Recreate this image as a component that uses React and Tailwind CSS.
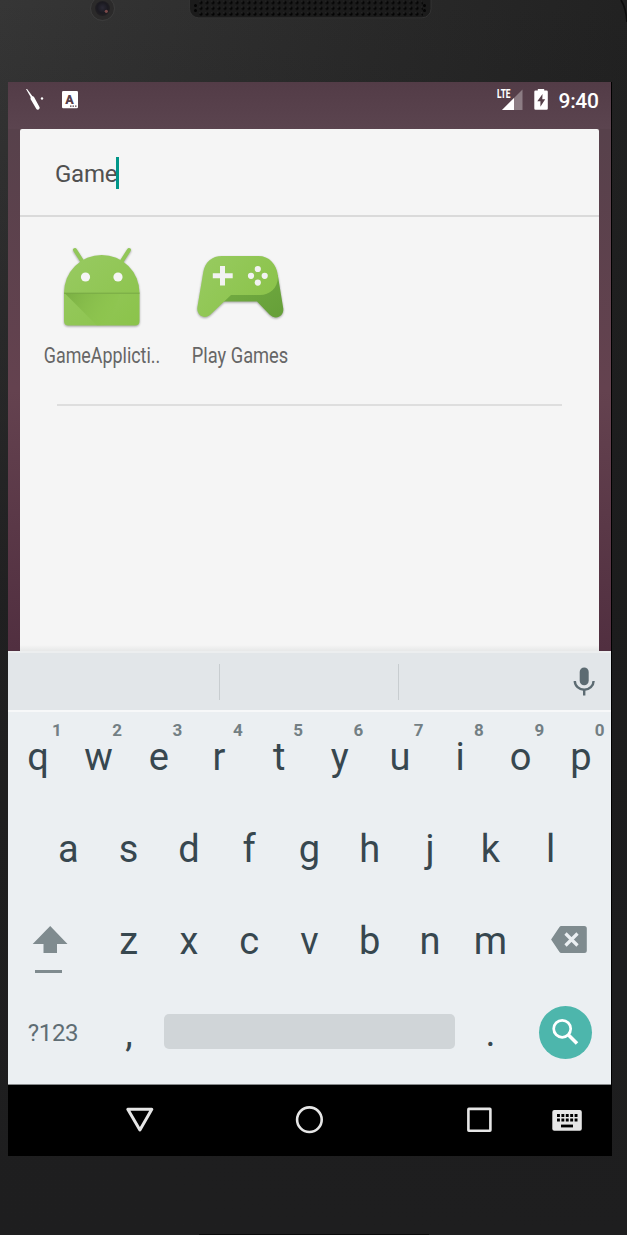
import React from "react";

const ROW_ONE = [
  ["q", "1"], ["w", "2"], ["e", "3"], ["r", "4"], ["t", "5"],
  ["y", "6"], ["u", "7"], ["i", "8"], ["o", "9"], ["p", "0"],
];
const ROW_TWO = ["a", "s", "d", "f", "g", "h", "j", "k", "l"];
const ROW_THREE = ["z", "x", "c", "v", "b", "n", "m"];

function PhoneTop() {
  return (
    <svg className="block h-[82px] w-full shrink-0" viewBox="0 0 627 82">
      <defs>
        <pattern id="mesh" x="197" y="-0.3" width="6" height="5.75" patternUnits="userSpaceOnUse">
          <circle cx="4" cy="2.9" r="1.7" fill="#050505" />
          <circle cx="3" cy="1.9" r="0.6" fill="#3a3a3a" />
        </pattern>
        <radialGradient id="lens" cx="0.5" cy="0.45" r="0.5">
          <stop offset="0" stopColor="#2b2935" />
          <stop offset="0.7" stopColor="#1b1a21" />
          <stop offset="1" stopColor="#211f22" />
        </radialGradient>
      </defs>
      <circle cx="102.5" cy="8.5" r="12" fill="#2b2a2a" stroke="#414141" strokeWidth="0.8" />
      <circle cx="102.5" cy="8.5" r="7.5" fill="url(#lens)" />
      <circle cx="106.3" cy="11.3" r="1.6" fill="#7b4a4a" />
      <rect x="189.5" y="-10" width="241.5" height="27.8" rx="9" fill="#1b1b1b" stroke="#373737" strokeWidth="0.8" />
      <rect x="198" y="0" width="225" height="16.5" fill="url(#mesh)" />
      <g fill="#050505">
        <circle cx="195.5" cy="5.5" r="1.5" /><circle cx="195.5" cy="10.5" r="1.5" />
        <circle cx="424.5" cy="5.5" r="1.5" /><circle cx="424.5" cy="10.5" r="1.5" />
      </g>
      <path d="M621 0Q626 8 627 22" fill="none" stroke="#0d0d0d" strokeWidth="1.6" />
    </svg>
  );
}

function StatusBar() {
  return (
    <div className="flex h-[47px] w-[603px] items-start bg-linear-to-b from-[#533c47] to-[#5b444f] pt-[6px] pl-4 text-white">
      <svg className="h-6 w-6" viewBox="24 88 24 24" fill="#fff">
        <path d="M26 89l1.1-.1 5.2 7.1 1.6.7 5.6 10.2c.5 1.1-.1 2-.9 2.5-.9.5-1.8.3-2.4-.7l-5.7-9.8.1-1.8z" />
        <circle cx="42" cy="98.5" r="1.2" />
      </svg>
      <svg className="ml-[13px] h-6 w-[18px]" viewBox="61 88 18 24">
        <rect x="62" y="91" width="16" height="17.2" rx="1.2" fill="#fff" />
        <text x="69.5" y="104" textAnchor="middle" fontFamily="Roboto, sans-serif" fontSize="12.5" fontWeight="900" fill="#56404a">A</text>
        <path d="M70 106.1h1.5m1 0h1.5m1 0h1.5" stroke="#56404a" strokeWidth="1.3" />
      </svg>
      <svg className="ml-[417px] h-6 w-[28px] overflow-visible" viewBox="496 88 28 24">
        <path d="M502 110L522.5 89.5V110Z" fill="#fff" fillOpacity="0.32" />
        <path d="M502 110L514 98V110Z" fill="#fff" />
        <text x="497" y="98" fontFamily="Roboto, sans-serif" fontSize="12.5" fontWeight="800" textLength="13.5" lengthAdjust="spacingAndGlyphs" fill="#fff">LTE</text>
      </svg>
      <svg className="ml-[9px] h-6 w-[18px]" viewBox="533 88 18 24">
        <path d="M535.5 90.5h2.3V89h6.4v1.5h2.4q1.2 0 1.2 1.2v16.8q0 1.3-1.2 1.3h-11.1q-1.2 0-1.2-1.3V91.7q0-1.2 1.2-1.2z" fill="#fff" />
        <path d="M542.5 94l-5.2 7.2h3.1v5.5l4.8-7.5h-2.9z" fill="#56404a" />
      </svg>
      <span className="ml-[7.5px] mt-[0.5px] text-[21px] font-medium leading-6 tracking-[-0.3px]">9:40</span>
    </div>
  );
}

function AndroidIcon() {
  return (
    <svg className="h-[90px] w-[90px]" viewBox="57 243 90 90">
      <defs>
        <linearGradient id="robot" x1="0" y1="0" x2="1" y2="1">
          <stop offset="0" stopColor="#98ca62" /><stop offset="1" stopColor="#8bc34a" />
        </linearGradient>
        <linearGradient id="fold" x1="0" y1="0" x2="1" y2="0.35">
          <stop offset="0" stopColor="#79ae42" /><stop offset="0.85" stopColor="#8bc34a" stopOpacity="0.4" /><stop offset="1" stopColor="#8bc34a" stopOpacity="0" />
        </linearGradient>
      </defs>
      <g className="drop-shadow-[0_1px_1px_rgba(0,0,0,0.35)]">
        <path d="M75 250l7 11M129 250l-7 11" stroke="#92c759" strokeWidth="4" strokeLinecap="round" />
        <path d="M64 292.5a37.7 37.5 0 0 1 75.5 0V321q0 4.5-4.5 4.5H68.5Q64 325.5 64 321Z" fill="url(#robot)" />
      </g>
      <path d="M64.5 293H120L110 325.5H97Z" fill="url(#fold)" />
      <path d="M64 293.2H139.5" stroke="#78a944" strokeWidth="1" />
      <circle cx="85.5" cy="277" r="4.6" fill="#f5f5f5" />
      <circle cx="118" cy="277" r="4.6" fill="#f5f5f5" />
    </svg>
  );
}

function GamesIcon() {
  return (
    <svg className="h-[90px] w-[94px]" viewBox="193 243 94 90">
      <defs>
        <linearGradient id="pad" x1="0" y1="0" x2="1" y2="0.6">
          <stop offset="0" stopColor="#98cb61" /><stop offset="1" stopColor="#8bc34a" />
        </linearGradient>
        <linearGradient id="grip" x1="0" y1="0" x2="1" y2="1">
          <stop offset="0" stopColor="#74ac43" /><stop offset="1" stopColor="#659f38" />
        </linearGradient>
      </defs>
      <g className="drop-shadow-[0_1px_1px_rgba(0,0,0,0.35)]">
        <path d="M223 301.5H257L269.5 314.5C276 321 284.5 316 283.2 308L277.8 275L230 290Z" fill="url(#grip)" />
        <path d="M222 256H258.5C269 256 276.5 264 277.8 275C279 287 270 295 260 295H231L210.5 314.5C205 320 196 315.5 197.4 307L203.3 272C205 262 212 256 222 256Z" fill="url(#pad)" />
      </g>
      <path d="M220 266h5v7.3h7.7v5H225v7.3h-5v-7.3h-7.2v-5h7.2z" fill="#f2f2f2" />
      <g fill="#f2f2f2">
        <circle cx="257.8" cy="269" r="3.1" /><circle cx="251" cy="275.8" r="3.1" />
        <circle cx="264.7" cy="275.8" r="3.1" /><circle cx="257.8" cy="282.6" r="3.1" />
      </g>
    </svg>
  );
}

function AppEntry({ icon, name, width }) {
  return (
    <div className="flex w-[138px] flex-col items-center">
      {icon}
      <svg className="mt-[9px] h-[30px] w-[134px] overflow-visible" viewBox="0 0 134 30">
        <text x={67 - width / 2} y="21" textLength={width} lengthAdjust="spacingAndGlyphs" fontSize="22" fill="#666">{name}</text>
      </svg>
    </div>
  );
}

function SearchPanel() {
  return (
    <div className="flex h-[522px] w-[603px] bg-linear-to-b from-[#57414b] via-[#64424f] to-[#512f40] px-3">
      <div className="flex w-[579px] flex-col rounded-t-xs bg-[#f5f5f5]">
        <div className="flex h-[88px] items-center border-b-2 border-[#dadada] pt-px pl-[35px]">
          <span className="pt-0.5 text-[24px] leading-8 tracking-[-0.25px] text-[#505050]">Game</span>
          <span className="-ml-px h-8 w-[3px] bg-[#009688]" />
        </div>
        <div className="ml-[13px] flex h-[187px] pt-[26px]">
          <AppEntry icon={<AndroidIcon />} name="GameApplicti.." width={116.5} />
          <AppEntry icon={<GamesIcon />} name="Play Games" width={96.5} />
        </div>
        <div className="mx-[37px] h-0.5 bg-[#dedede]" />
        <div className="mt-auto h-1.5 bg-linear-to-b from-[#f5f5f5] to-[#e7e8e8]" />
      </div>
    </div>
  );
}

function Key({ letter, hint }) {
  return (
    <div className="relative flex w-[60.3px] items-center justify-center text-[38px] leading-[44px] text-[#37474f]">
      {letter}
      {hint && (
        <span className="absolute top-[8px] left-[44px] text-[17px] font-bold leading-5 text-[#737f84]">{hint}</span>
      )}
    </div>
  );
}

function Keyboard() {
  return (
    <div className="flex w-[603px] flex-col bg-[#ebeff2]">
      <div className="flex h-[59px] items-center border-t-2 border-[#eceeef] bg-[#e2e6e9]">
        <div className="h-9 w-[211.5px] border-r border-[#c8cdd0]" />
        <div className="h-9 w-[179.5px] border-r border-[#c8cdd0]" />
        <svg className="ml-[173px] h-[30px] w-6" viewBox="572 667 24 30">
          <rect x="579.7" y="667.5" width="9" height="17.8" rx="4.5" fill="#5c6b72" />
          <path d="M574.8 681a9.4 8.7 0 0 0 18.8 0M584.2 689.5v6" fill="none" stroke="#5c6b72" strokeWidth="2.4" />
        </svg>
      </div>
      <div className="h-[374px] border-t-2 border-[#f7f8f9]">
        <div className="flex h-[92px] pb-0.5">
          {ROW_ONE.map(([letter, hint]) => <Key key={letter} letter={letter} hint={hint} />)}
        </div>
        <div className="flex h-[92px] justify-center pb-0.5">
          {ROW_TWO.map((letter) => <Key key={letter} letter={letter} />)}
        </div>
        <div className="flex h-[92px] justify-between pb-0.5">
          <svg className="h-[88px] w-[84px]" viewBox="8 896 84 88" fill="#7f8b8f">
            <path d="M50.2 926L67.5 944H57V953H43.5V944H32.7Z" />
            <rect x="35" y="970" width="27" height="3" />
          </svg>
          <div className="flex">
            {ROW_THREE.map((letter) => <Key key={letter} letter={letter} />)}
          </div>
          <svg className="h-[88px] w-[84px]" viewBox="527.2 896 84 88">
            <path d="M551.3 939.5L559.5 927.2Q560.3 926 561.5 926H584.5Q587 926 587 928.5V950.5Q587 953 584.5 953H561.5Q560.3 953 559.5 951.8Z" fill="#7f8b8f" />
            <path d="M565.7 933.5l12 12M577.7 933.5l-12 12" stroke="#ebeff2" strokeWidth="3.2" />
          </svg>
        </div>
        <div className="flex h-[92px] items-center pb-[5px]">
          <div className="w-[90px] pt-0.5 text-center text-[24px] leading-8 tracking-[-0.3px] text-[#5f6d74]">?123</div>
          <div className="w-[66px] pt-0.5 pr-4 pl-[12px] text-center text-[38px] leading-[44px] text-[#37474f]">,</div>
          <div className="h-[35px] w-[291px] rounded-[5px] bg-[#d0d5d8]" />
          <div className="w-[71px] pt-0.5 text-center text-[38px] leading-[44px] text-[#37474f]">.</div>
          <div className="mt-0.5 ml-[13px] flex h-[53px] w-[53px] items-center justify-center rounded-full bg-[#4db6ac]">
            <svg className="h-[53px] w-[53px]" viewBox="539 1005.5 53 53" fill="none" stroke="#fff">
              <circle cx="562.2" cy="1028.3" r="8.5" strokeWidth="2.7" />
              <path d="M568.5 1034.5L577 1043" strokeWidth="3.6" />
            </svg>
          </div>
        </div>
      </div>
    </div>
  );
}

function NavBar() {
  return (
    <div className="flex h-[72px] flex-col">
      <div className="h-px w-[603px] bg-[#86898b]" />
      <svg className="h-[71px] w-[604px]" viewBox="8 1085 604 71" fill="none" stroke="#e6e6e6" strokeWidth="2.6">
        <path d="M127.8 1109.3H151.8L139.9 1130Z" strokeLinejoin="round" strokeWidth="3" />
        <circle cx="309.4" cy="1119.7" r="12.3" />
        <rect x="468.4" y="1108.9" width="22" height="21.8" rx="0.5" />
        <rect x="552.3" y="1110" width="29.5" height="20.8" rx="2" fill="#e6e6e6" stroke="none" />
        <path d="M557 1115.5h21.5M557 1120h21.5" stroke="#000" strokeWidth="2.9" strokeDasharray="2.9 1.5" />
        <path d="M561 1126h12" stroke="#000" strokeWidth="2.8" />
      </svg>
    </div>
  );
}

export default function App() {
  return (
    <div className="flex h-[1235px] w-[627px] flex-col overflow-hidden bg-[linear-gradient(100deg,#363636_0%,#292929_45%,#1e1e1e_90%)] font-['Roboto',sans-serif]">
      <div className="flex h-full flex-col bg-linear-to-b from-transparent via-[#1b1b1c]/80 to-[#1e1e1f]">
        <PhoneTop />
        <div className="ml-2 flex w-[604px] flex-col bg-black">
          <StatusBar />
          <SearchPanel />
          <Keyboard />
          <NavBar />
        </div>
        <div className="mx-auto mt-auto h-px w-[230px] bg-[#0a0a0a]" />
      </div>
    </div>
  );
}
